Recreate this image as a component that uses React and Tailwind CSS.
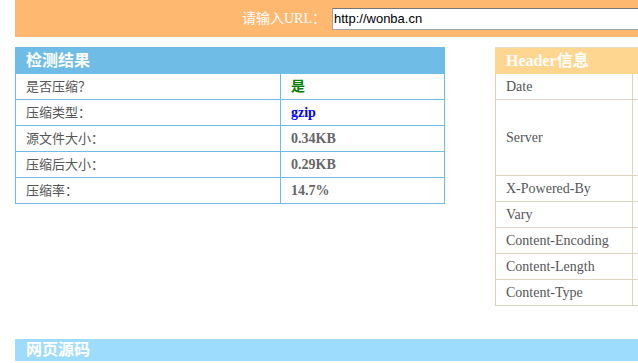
import React from "react";

const serif = "font-['Liberation_Serif','Noto_Sans_CJK_SC',serif]";

const leftRows = [
  ["是否压缩？", "是", "text-[#008000]"],
  ["压缩类型：", "gzip", "text-[#0000ff]"],
  ["源文件大小：", "0.34KB", "text-[#666666]"],
  ["压缩后大小：", "0.29KB", "text-[#666666]"],
  ["压缩率：", "14.7%", "text-[#666666]"],
];

const rightRows = [
  ["Date", "h-[26px]"],
  ["Server", "h-[76px]"],
  ["X-Powered-By", "h-[26px]"],
  ["Vary", "h-[26px]"],
  ["Content-Encoding", "h-[26px]"],
  ["Content-Length", "h-[26px]"],
  ["Content-Type", "h-[26px]"],
];

export default function App() {
  return (
    <div className={`w-[638px] h-[363px] overflow-hidden bg-white ${serif}`}>
      <div className="pl-[15px] w-[800px]">
        {/* top bar */}
        <div className="h-[37px] bg-[#ffb870] flex items-center pl-[227px]">
          <span className="text-white text-[14px] leading-none">请输入URL：</span>
          <div className="ml-[6px] w-[400px] h-[22px] bg-white border border-[#a5a5a5] border-t-[#777777] flex items-center pl-[1px] font-['Liberation_Sans',sans-serif] text-[13px] text-black">
            http://wonba.cn
          </div>
        </div>

        <div className="flex mt-[10px] items-start">
          {/* left panel */}
          <div className="w-[430px]">
            <div className="h-[27px] bg-[#6fbde6] flex items-center pl-[11px] text-white font-bold text-[16px]">
              检测结果
            </div>
            <div className="border-x border-[#6fbde6]">
              {leftRows.map(([k, v, c]) => (
                <div key={k} className="grid grid-cols-[265px_1fr] h-[26px] border-b border-[#6fbde6]">
                  <div className="border-r border-[#6fbde6] flex items-center pl-[10px] text-[13px] text-[#555555]">
                    {k}
                  </div>
                  <div className={`flex items-center pl-[10px] text-[14px] font-bold ${c}`}>{v}</div>
                </div>
              ))}
            </div>
          </div>

          {/* right panel */}
          <div className="ml-[50px] w-[300px]">
            <div className="h-[27px] bg-[#ffd68f] border-t border-[#e8dcc4] flex items-center pl-[11px] text-white font-bold text-[16px]">
              Header信息
            </div>
            <div className="border-l border-[#ddd3c0]">
              {rightRows.map(([k, h]) => (
                <div key={k} className={`grid grid-cols-[137px_1fr] border-b border-[#ddd3c0] ${h}`}>
                  <div className="border-r border-[#ddd3c0] flex items-center pl-[10px] text-[14px] text-[#555555]">
                    {k}
                  </div>
                  <div></div>
                </div>
              ))}
            </div>
          </div>
        </div>

        {/* bottom bar */}
        <div className="mt-[33px] h-[22px] bg-[#9edcfd] flex items-center pl-[11px] text-white font-bold text-[16px]">
          网页源码
        </div>
      </div>
    </div>
  );
}
